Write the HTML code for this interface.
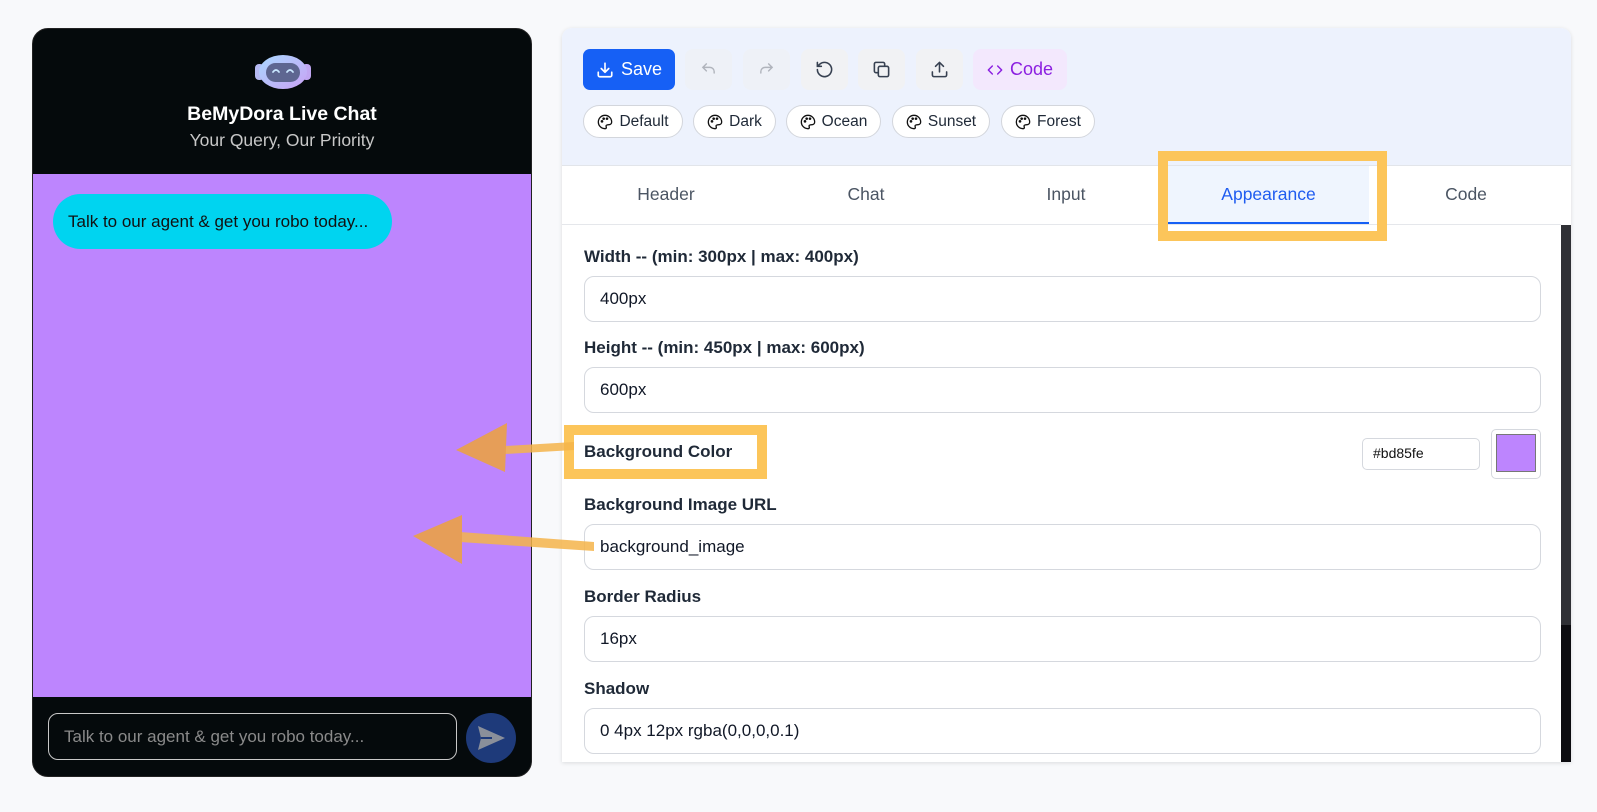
<!DOCTYPE html>
<html><head><meta charset="utf-8"><style>
*{box-sizing:border-box;margin:0;padding:0}
body{width:1597px;height:812px;background:#f8f9fb;font-family:"Liberation Sans",sans-serif;position:relative;overflow:hidden}
.a{position:absolute}
.chat{left:32px;top:28px;width:500px;height:749px;border-radius:16px;background:#050a0c;overflow:hidden;border:1px solid #222}
.ttl{left:0;width:100%;text-align:center}
.inp{position:absolute;left:584px;width:957px;height:46px;border:1.5px solid #d5d8de;border-radius:10px;background:#fff;font-size:17px;color:#111827;padding-left:15px;line-height:43px}
.lbl{position:absolute;left:584px;font-size:17px;font-weight:bold;color:#1f2937;line-height:20px}
.ib{position:absolute;top:49px;width:47px;height:41px;border-radius:8px;background:#f1f2f4;display:flex;align-items:center;justify-content:center}
.pill{position:absolute;top:105px;height:33px;border:1px solid #d3d6dc;border-radius:17px;background:#fff;font-size:15.5px;color:#1f2937;display:flex;align-items:center;justify-content:center;gap:6px}
.tab{position:absolute;top:166px;height:58px;width:200px;text-align:center;line-height:56px;font-size:17.5px;color:#4b5563}
</style></head><body>

<div class="a chat">
  <svg class="a" style="left:222px;top:25px" width="56" height="36" viewBox="0 0 56 36">
    <defs><linearGradient id="g" x1="0" y1="0" x2="1" y2="1"><stop offset="0" stop-color="#a9d8ff"/><stop offset="1" stop-color="#c9a2f5"/></linearGradient></defs>
    <rect x="0" y="10" width="9" height="16" rx="4" fill="#b6b9f2"/><rect x="47" y="10" width="9" height="16" rx="4" fill="#c0a6f2"/>
    <ellipse cx="28" cy="18" rx="24" ry="17" fill="url(#g)"/>
    <rect x="11" y="9" width="34" height="19" rx="9.5" fill="#5e6691"/>
    <path d="M18 18 q3-4 6 0 M32 18 q3-4 6 0" stroke="#c9e6ff" stroke-width="1.8" fill="none" stroke-linecap="round"/>
  </svg>
  <div class="a ttl" style="top:74px;font-size:19.5px;font-weight:bold;color:#fff">BeMyDora Live Chat</div>
  <div class="a ttl" style="top:101px;font-size:17.5px;color:#c8c8c8">Your Query, Our Priority</div>
  <div class="a" style="left:0;top:145px;width:100%;height:523px;background:#bd85fe">
    <div class="a" style="left:20px;top:20px;width:339px;height:55px;border-radius:28px;background:#00d4f0;font-size:17px;color:#111;line-height:55px;padding-left:15px">Talk to our agent &amp; get you robo today...</div>
  </div>
  <div class="a" style="left:15px;top:684px;width:409px;height:47px;border:1px solid #c8c8c8;border-radius:10px;font-size:17px;color:#8a8a8a;line-height:45px;padding-left:15px">Talk to our agent &amp; get you robo today...</div>
  <div class="a" style="left:433px;top:684px;width:50px;height:50px;border-radius:25px;background:#1e3a7a">
    <svg width="50" height="50" viewBox="0 0 50 50"><path d="M12 13 L39 25 L12 37 L15 25 Z" fill="#8a8f9a"/><path d="M15 25 H26" stroke="#1e3a7a" stroke-width="2"/></svg>
  </div>
</div>

<div class="a" style="left:562px;top:28px;width:1009px;height:734px;background:#fff;border-radius:10px 10px 0 0;box-shadow:0 1px 4px rgba(0,0,0,.12);overflow:hidden">
  <div class="a" style="left:0;top:0;width:100%;height:138px;background:#edf2fd;border-bottom:1px solid #e2e5ea"></div>
  <div class="a" style="left:0;top:196px;width:999px;height:1px;background:#e5e7eb"></div>
  <div class="a" style="left:999px;top:197px;width:10px;height:400px;background:#2f3035"></div>
  <div class="a" style="left:999px;top:597px;width:10px;height:137px;background:#0c0c10"></div>
</div>

<div class="a" style="left:583px;top:49px;width:92px;height:41px;border-radius:7px;background:#1660f5;color:#fff;font-size:18px;display:flex;align-items:center;justify-content:center;gap:7px">
<svg width="18" height="18" viewBox="0 0 24 24" fill="none" stroke="#fff" stroke-width="2.2" stroke-linecap="round" stroke-linejoin="round"><path d="M21 15v4a2 2 0 0 1-2 2H5a2 2 0 0 1-2-2v-4M7 10l5 5 5-5M12 15V3"/></svg>Save</div>
<div class="ib" style="left:685px;background:#eef1f7"><svg width="17" height="17" viewBox="0 0 24 24" fill="none" stroke="#b0b4bc" stroke-width="2" stroke-linecap="round"><path d="M9 14L4 9l5-5M4 9h10a6 6 0 0 1 6 6v2"/></svg></div>
<div class="ib" style="left:743px;background:#eef1f7"><svg width="17" height="17" viewBox="0 0 24 24" fill="none" stroke="#b0b4bc" stroke-width="2" stroke-linecap="round"><path d="M15 14l5-5-5-5M20 9H10a6 6 0 0 0-6 6v2"/></svg></div>
<div class="ib" style="left:801px"><svg width="19" height="19" viewBox="0 0 24 24" fill="none" stroke="#374151" stroke-width="2" stroke-linecap="round"><path d="M3 12a9 9 0 1 0 3-6.7L3 8M3 3v5h5"/></svg></div>
<div class="ib" style="left:858px"><svg width="19" height="19" viewBox="0 0 24 24" fill="none" stroke="#374151" stroke-width="2"><rect x="8" y="8" width="13" height="13" rx="2"/><path d="M16 8V5a2 2 0 0 0-2-2H5a2 2 0 0 0-2 2v9a2 2 0 0 0 2 2h3"/></svg></div>
<div class="ib" style="left:916px"><svg width="19" height="19" viewBox="0 0 24 24" fill="none" stroke="#374151" stroke-width="2" stroke-linecap="round" stroke-linejoin="round"><path d="M21 15v4a2 2 0 0 1-2 2H5a2 2 0 0 1-2-2v-4M17 8l-5-5-5 5M12 3v12"/></svg></div>
<div class="a" style="left:973px;top:49px;width:94px;height:41px;border-radius:8px;background:#f3e8fd;color:#8b1fe0;font-size:18px;display:flex;align-items:center;justify-content:center;gap:7px"><svg width="16" height="16" viewBox="0 0 24 24" fill="none" stroke="#8b1fe0" stroke-width="2.2" stroke-linecap="round" stroke-linejoin="round"><path d="M8 6l-6 6 6 6M16 6l6 6-6 6"/></svg>Code</div>

<div class="pill" style="left:583px;width:100px"><svg width="16" height="16" viewBox="0 0 24 24" fill="none" stroke="#111" stroke-width="2"><path d="M12 2a10 10 0 0 0 0 20c1.5 0 2-1 2-2s-1-2 0-3 2-1 4-1a4 4 0 0 0 4-4c0-5.5-4.5-10-10-10z"/><circle cx="7.5" cy="11" r="1"/><circle cx="10" cy="7" r="1"/><circle cx="15" cy="7" r="1"/></svg>Default</div>
<div class="pill" style="left:693px;width:83px"><svg width="16" height="16" viewBox="0 0 24 24" fill="none" stroke="#111" stroke-width="2"><path d="M12 2a10 10 0 0 0 0 20c1.5 0 2-1 2-2s-1-2 0-3 2-1 4-1a4 4 0 0 0 4-4c0-5.5-4.5-10-10-10z"/><circle cx="7.5" cy="11" r="1"/><circle cx="10" cy="7" r="1"/><circle cx="15" cy="7" r="1"/></svg>Dark</div>
<div class="pill" style="left:786px;width:95px"><svg width="16" height="16" viewBox="0 0 24 24" fill="none" stroke="#111" stroke-width="2"><path d="M12 2a10 10 0 0 0 0 20c1.5 0 2-1 2-2s-1-2 0-3 2-1 4-1a4 4 0 0 0 4-4c0-5.5-4.5-10-10-10z"/><circle cx="7.5" cy="11" r="1"/><circle cx="10" cy="7" r="1"/><circle cx="15" cy="7" r="1"/></svg>Ocean</div>
<div class="pill" style="left:892px;width:98px"><svg width="16" height="16" viewBox="0 0 24 24" fill="none" stroke="#111" stroke-width="2"><path d="M12 2a10 10 0 0 0 0 20c1.5 0 2-1 2-2s-1-2 0-3 2-1 4-1a4 4 0 0 0 4-4c0-5.5-4.5-10-10-10z"/><circle cx="7.5" cy="11" r="1"/><circle cx="10" cy="7" r="1"/><circle cx="15" cy="7" r="1"/></svg>Sunset</div>
<div class="pill" style="left:1001px;width:94px"><svg width="16" height="16" viewBox="0 0 24 24" fill="none" stroke="#111" stroke-width="2"><path d="M12 2a10 10 0 0 0 0 20c1.5 0 2-1 2-2s-1-2 0-3 2-1 4-1a4 4 0 0 0 4-4c0-5.5-4.5-10-10-10z"/><circle cx="7.5" cy="11" r="1"/><circle cx="10" cy="7" r="1"/><circle cx="15" cy="7" r="1"/></svg>Forest</div>

<div class="tab" style="left:566px">Header</div>
<div class="tab" style="left:766px">Chat</div>
<div class="tab" style="left:966px">Input</div>
<div class="tab" style="left:1168px;width:201px;background:#eff5fe;color:#1f5cf0;border-bottom:2px solid #1660f5;height:58px">Appearance</div>
<div class="tab" style="left:1366px">Code</div>
<div class="a" style="left:1158px;top:151px;width:229px;height:90px;border:10px solid #fcc55a"></div>

<div class="lbl" style="top:247px">Width -- (min: 300px | max: 400px)</div>
<div class="inp" style="top:276px">400px</div>
<div class="lbl" style="top:338px">Height -- (min: 450px | max: 600px)</div>
<div class="inp" style="top:367px">600px</div>
<div class="lbl" style="top:442px">Background Color</div>
<div class="a" style="left:1362px;top:438px;width:118px;height:32px;border:1.5px solid #d5d8de;border-radius:5px;font-size:14px;color:#111;line-height:29px;padding-left:10px">#bd85fe</div>
<div class="a" style="left:1491px;top:429px;width:50px;height:50px;border:1.5px solid #d5d8de;border-radius:5px;background:#fff"><div style="margin:4px;width:40px;height:38px;background:#bd85fe;border:1px solid #777"></div></div>
<div class="lbl" style="top:495px">Background Image URL</div>
<div class="inp" style="top:524px">background_image</div>
<div class="lbl" style="top:587px">Border Radius</div>
<div class="inp" style="top:616px">16px</div>
<div class="lbl" style="top:679px">Shadow</div>
<div class="inp" style="top:708px">0 4px 12px rgba(0,0,0,0.1)</div>

<div class="a" style="left:564px;top:425px;width:203px;height:54px;border:10px solid #fcc55a"></div>

<svg class="a" style="left:0;top:0" width="1597" height="812">
  <path d="M505 446 L574 442 L574 450 L505 454 Z" fill="#f5b44a" opacity=".85"/>
  <path d="M456 450 L507 423 L505 472 Z" fill="#e89f4f" opacity=".95"/>
  <path d="M460 532 L594 542 L594 551 L460 542 Z" fill="#f5b44a" opacity=".85"/>
  <path d="M413 536 L462 515 L462 564 Z" fill="#e89f4f" opacity=".95"/>
</svg>
</body></html>
